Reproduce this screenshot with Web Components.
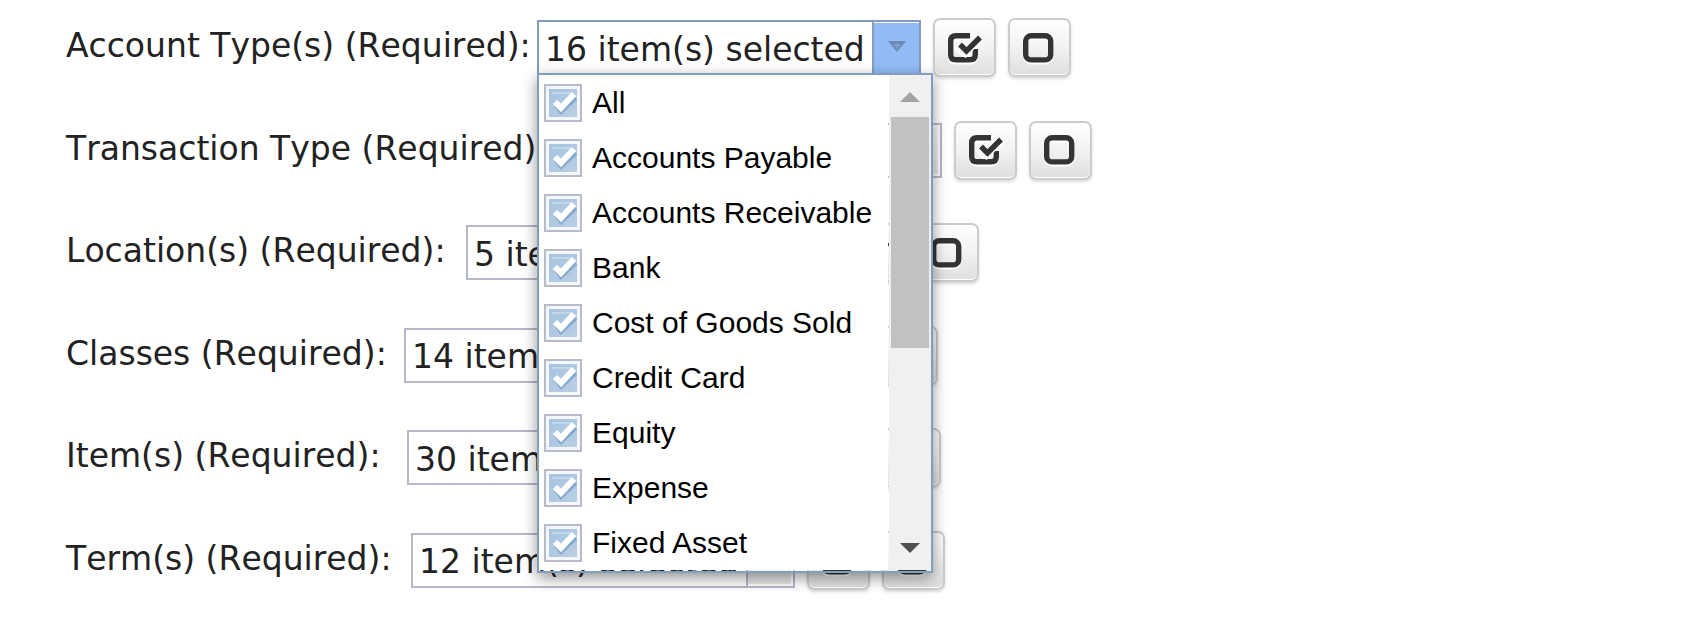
<!DOCTYPE html>
<html lang="en">
<head>
<meta charset="utf-8">
<meta name="viewport" content="width=device-width, initial-scale=1">
<title>Report filters</title>
<style>
  body { margin: 0; background: #fff; color: #222; font: 33px/44px Verdana, "DejaVu Sans", sans-serif; font-kerning: none; }
</style>
</head>
<body>
<filter-form>
  <filter-row label="Account Type(s) (Required):" value="16 item(s) selected" style="--label: 471px" open>
    <option-list>
      <check-option>All</check-option>
      <check-option>Accounts Payable</check-option>
      <check-option>Accounts Receivable</check-option>
      <check-option>Bank</check-option>
      <check-option>Cost of Goods Sold</check-option>
      <check-option>Credit Card</check-option>
      <check-option>Equity</check-option>
      <check-option>Expense</check-option>
      <check-option>Fixed Asset</check-option>
    </option-list>
  </filter-row>
  <filter-row label="Transaction Type (Required):" value="16 item(s) selected" style="--label: 492px"></filter-row>
  <filter-row label="Location(s) (Required):" value="5 item(s) selected" style="--label: 400px; --box: 363px"></filter-row>
  <filter-row label="Classes (Required):" value="14 item(s) selected" style="--label: 338px"></filter-row>
  <filter-row label="Item(s) (Required):" value="30 item(s) selected" style="--label: 341px"></filter-row>
  <filter-row label="Term(s) (Required):" value="12 item(s) selected" style="--label: 345px"></filter-row>
</filter-form>

<script>
class Base extends HTMLElement {
  constructor() {
    super();
    this.attachShadow({ mode: 'open' });
  }
  connectedCallback() {
    if (!this.shadowRoot.childNodes.length) this.shadowRoot.innerHTML = this.render();
  }
}

customElements.define('filter-form', class extends Base {
  render() {
    return `<style>
      :host { display: block; }
      form { box-sizing: border-box; min-height: 100vh; padding: 18px 24px 28px 66px; display: flex; flex-direction: column; justify-content: space-between; gap: 40px; }
    </style><form><slot></slot></form>`;
  }
});

customElements.define('filter-row', class extends Base {
  render() {
    return `<style>
      :host { display: flex; align-items: center; }
      :host([open]) { z-index: 1; }
      label { flex: none; box-sizing: border-box; width: var(--label); padding-bottom: 3px; white-space: nowrap; }
      .tools { display: flex; gap: 12px; margin-left: 12px; }
      .box { position: relative; flex: none; box-sizing: border-box; width: var(--box, 384px); height: 55px; display: flex; border: 2px solid #b5b8c8; background: #fff; }
      input { flex: 1; min-width: 0; box-sizing: border-box; margin: 0; border: 0; padding: 4px 0 0 6px; background: none; font: inherit; color: inherit; outline: 0; }
      button { flex: none; box-sizing: border-box; width: 45px; margin: 0; padding: 0; border: solid #fff; border-width: 2px 2px 2px 0; background: linear-gradient(#fafafa, #e6e6e6); box-shadow: -2px 0 #b5b8c8; display: grid; place-items: center; }
      :host([open]) .box { border-color: #819dbf; }
      :host([open]) button { background: #92bbf5; border-width: 1px 0 0; box-shadow: -2px 0 #819dbf; }
      ::slotted(option-list) { position: absolute; z-index: 1; left: -2px; top: 51px; }
    </style>
    <label for="value">${this.getAttribute('label')}</label>
    <div class="box">
      <input id="value" type="text" readonly value="${this.getAttribute('value')}">
      <button type="button" aria-label="Show options"><svg width="20" height="14" viewBox="0 0 20 14"><path d="M1 0H19L10 11Z" fill="#6c8ab5"/><path d="M6 3H14L10 8Z" fill="#7f9fcc"/></svg></button>
      <slot></slot>
    </div>
    <div class="tools"><tool-button kind="all"></tool-button><tool-button kind="none"></tool-button></div>`;
  }
});

customElements.define('tool-button', class extends Base {
  render() {
    const all = this.getAttribute('kind') === 'all';
    const shape = all
      ? '<path d="M24 4.700H10Q4.700 4.700 4.700 10V23.500Q4.700 28.800 10 28.800H24Q29.300 28.800 29.300 23.500V18" fill="none" stroke="#333" stroke-width="5.400"/><path d="M12 12L19.500 20L36 3" fill="none" stroke="#f8f8f8" stroke-width="10"/><path d="M14 13.500L20.500 20L34 6.500" fill="none" stroke="#333" stroke-width="5.400"/>'
      : '<rect x="4.700" y="4.700" width="25" height="24.200" rx="5.500" fill="none" stroke="#333" stroke-width="5.400"/>';
    return `<style>
      :host { display: block; }
      button { box-sizing: border-box; width: 63px; height: 59px; margin: 0; padding: 0; border: 2px solid #ccc; border-radius: 7px; background: linear-gradient(#fff, #f2f2f2 50%, #dedede); box-shadow: inset 0 -1px #fff, 0 2px 3px rgba(0,0,0,.15); display: grid; place-items: center; }
      svg { filter: drop-shadow(0 2px 0 #fff); }
    </style>
    <button type="button" aria-label="${all ? 'Select all' : 'Clear all'}"><svg width="36" height="34" viewBox="1 0 36 34">${shape}</svg></button>`;
  }
});

customElements.define('option-list', class extends Base {
  render() {
    return `<style>
      :host { box-sizing: border-box; width: 396px; height: 500px; padding-bottom: 1px; border: 2px solid #819dbf; box-shadow: 0 5px 14px rgba(0,0,0,.42); display: flex; gap: 1px; color: #000; font: 30px/38px Arial, "Liberation Sans", sans-serif; }
      .items { flex: 1; box-sizing: border-box; overflow: hidden; padding: 9px 5px 0; background: #fff; display: flex; flex-direction: column; gap: 17px; }
      .bar { flex: none; width: 42px; box-sizing: border-box; padding: 17px 2px; background: #f0f0f0; display: flex; flex-direction: column; align-items: center; }
      .thumb { width: 38px; height: 231px; margin-top: 15px; background: #c1c1c1; }
      .down { margin-top: auto; }
      svg { display: block; flex: none; }
    </style>
    <div class="items" role="group" aria-label="Account types"><slot></slot></div>
    <div class="bar">
      <svg width="20" height="10" viewBox="0 0 20 10"><path d="M0 10L10 0L20 10Z" fill="#a3a3a3"/></svg>
      <div class="thumb"></div>
      <svg class="down" width="20" height="10" viewBox="0 0 20 10"><path d="M0 0H20L10 10Z" fill="#505050"/></svg>
    </div>`;
  }
});

customElements.define('check-option', class extends Base {
  render() {
    return `<style>
      :host { display: block; }
      label { display: flex; align-items: center; gap: 10px; white-space: nowrap; }
      .box { flex: none; display: grid; width: 38px; height: 38px; }
      .box > * { grid-area: 1 / 1; }
      input { appearance: none; box-sizing: border-box; width: 38px; height: 38px; margin: 0; border: 2px solid #b8bcc9; background: linear-gradient(135deg, #a6c3df, #b9cfe4) content-box, #f5f8fb; padding: 3px; }
      svg { pointer-events: none; visibility: hidden; }
      input:checked + svg { visibility: visible; }
    </style>
    <label><span class="box"><input type="checkbox" checked><svg width="38" height="38" viewBox="0 0 38 38"><path d="M8 9H27" stroke="#c3d7ea" stroke-width="2"/><path d="M12 21L17 28L32 14" fill="none" stroke="#86a9ce" stroke-width="4"/><path d="M11 18L17 24L30 10" fill="none" stroke="#fff" stroke-width="6"/></svg></span><span><slot></slot></span></label>`;
  }
});
</script>
</body>
</html>
